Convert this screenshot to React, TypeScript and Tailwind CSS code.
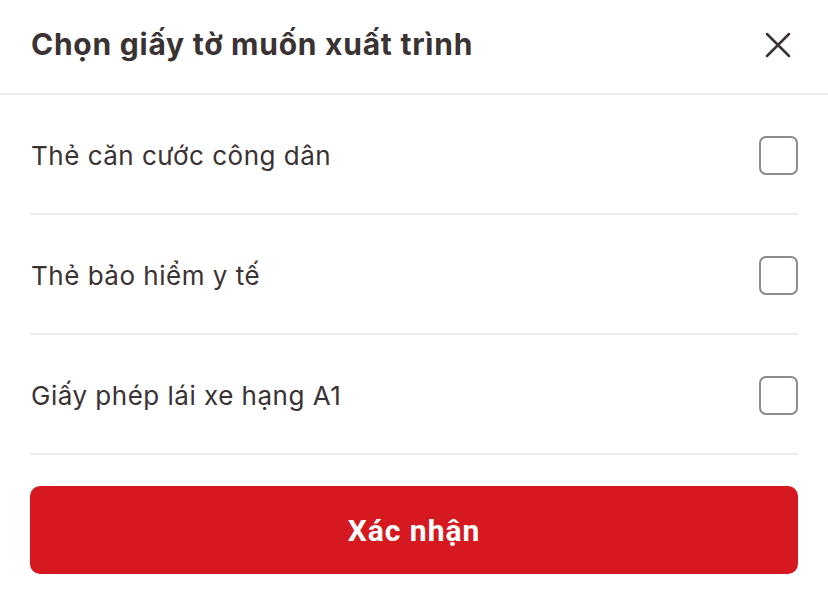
import { useState } from "react";

const items = ["Thẻ căn cước công dân", "Thẻ bảo hiểm y tế", "Giấy phép lái xe hạng A1"];

export default function App() {
	const [checked, setChecked] = useState<boolean[]>([false, false, false]);

	const toggle = (index: number) => {
		const next = [...checked];
		next[index] = !next[index];
		setChecked(next);
	};

	return (
		<div className="w-[828px] h-[596px] bg-white text-[#3a3233] font-['Inter',sans-serif]">
			<div className="flex items-center justify-between h-[95px] pl-[31px] pr-[37px] pb-[4px] border-b-2 border-[#ececec]">
				<h1 className="text-[30px] font-bold tracking-[0.75px]">Chọn giấy tờ muốn xuất trình</h1>
				<button className="w-[26px] h-[26px] text-[#3a3233]">
					<svg viewBox="0 0 26 26" className="w-full h-full" fill="none" stroke="currentColor" strokeWidth="2.5" strokeLinecap="round">
						<path d="M2 2L24 24M24 2L2 24" />
					</svg>
				</button>
			</div>

			<div className="px-[30px]">
				{items.map((label, index) => (
					<div key={label} className="flex items-center justify-between h-[120px] pt-[2px] border-b-2 border-[#ececec]">
						<span className="text-[26px] tracking-[0.5px] pl-px">{label}</span>
						<button
							onClick={() => toggle(index)}
							className="w-[39px] h-[39px] rounded-[7px] border-2 border-[#8c8c8c] bg-white"
						/>
					</div>
				))}

				<button className="mt-[31px] w-full h-[88px] rounded-[10px] bg-[#d61920] text-white text-[30px] font-bold tracking-[1px] font-['Roboto',sans-serif]">
					Xác nhận
				</button>
			</div>
		</div>
	);
}
